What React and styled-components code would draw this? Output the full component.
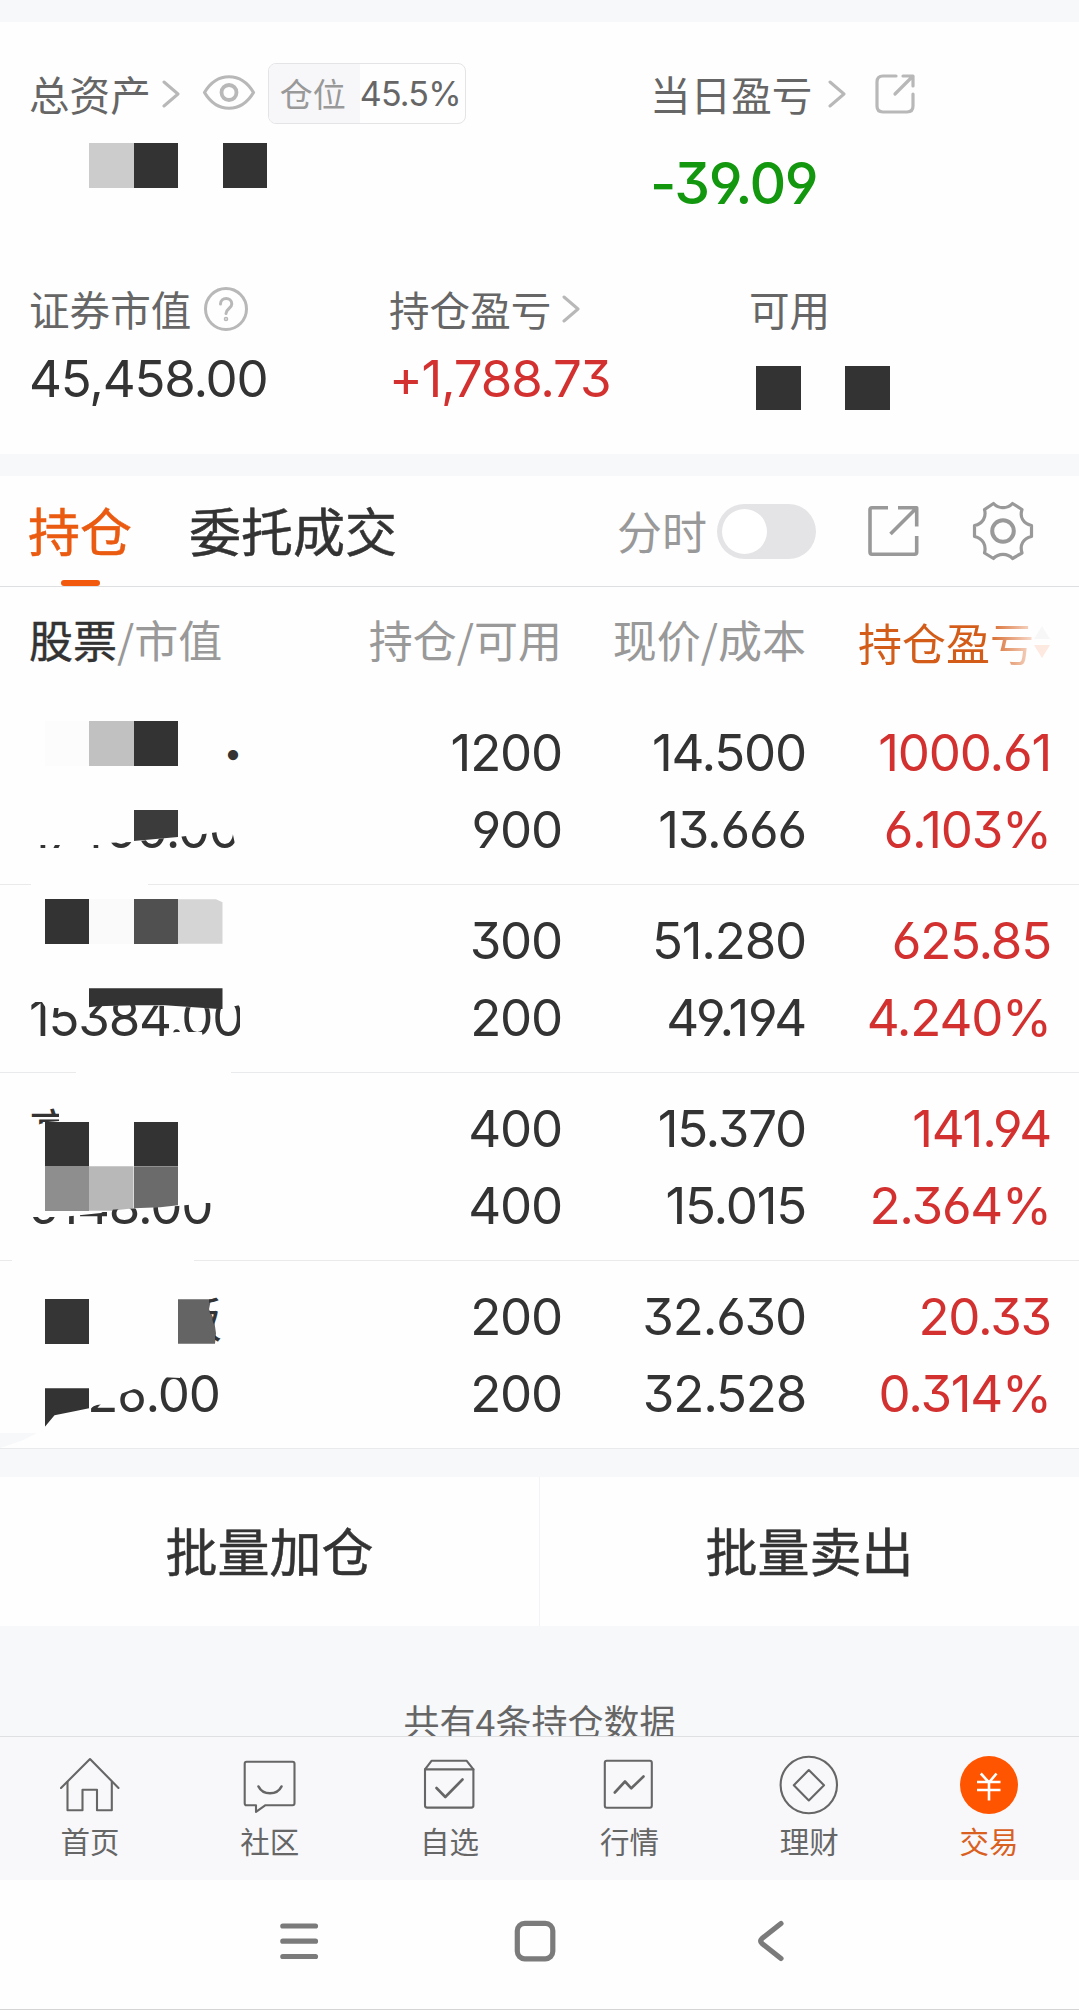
import React from "react";
import styled, { createGlobalStyle } from "styled-components";

const GlobalStyle = createGlobalStyle`
  * {
    box-sizing: border-box;
  }
  body {
    margin: 0;
    background-color: #f7f8fa;
    font-family: "Noto Sans CJK SC", sans-serif;
    color: #333;
  }
`;

const Page = styled.div`
  width: 1079px;
  height: 2010px;
  display: flex;
  flex-direction: column;
  overflow: hidden;
`;

/* ---------- shared ---------- */
const Num = styled.span`
  font-family: "Inter", "Noto Sans CJK SC", sans-serif;
  font-size: ${(p) => p.$size || 51}px;
  font-weight: ${(p) => p.$weight || 400};
  font-feature-settings: "cv03", "cv04", "cv09";
  letter-spacing: ${(p) => p.$track || -1.2}px;
  color: ${(p) => p.$color || "#333"};
  white-space: nowrap;
`;

const Svg = styled.svg`
  display: block;
  flex: none;
  fill: none;
  stroke: ${(p) => p.$color || "#b8b8b8"};
  stroke-width: ${(p) => p.$stroke || 3};
  stroke-linecap: round;
  stroke-linejoin: round;
  margin-left: ${(p) => p.$left || 0}px;
`;

const Chevron = ({ left }) => (
  <Svg width="18" height="30" viewBox="0 0 18 30" $left={left}>
    <path d="M2 3L16 15L2 27" />
  </Svg>
);

/* ---------- asset overview ---------- */
const Overview = styled.section`
  height: 432px;
  margin-top: 22px;
  padding: 41px 0 0 29px;
  background-color: #fefefe;
`;
const TopGrid = styled.div`
  display: grid;
  grid-template-columns: 621px 1fr;
`;
const StatGrid = styled.div`
  display: grid;
  grid-template-columns: 360px 360px 1fr;
  margin-top: 61px;
`;
const LabelRow = styled.div`
  display: flex;
  align-items: center;
  height: ${(p) => p.$height}px;
`;
const Label = styled.span`
  font-size: 40.6px;
  line-height: 50px;
  color: #666;
`;
const ValueRow = styled.div`
  display: flex;
  align-items: center;
  height: ${(p) => p.$height}px;
  margin-top: ${(p) => p.$top}px;
`;
const MaskRow = styled.div`
  display: flex;
  height: 44.5px;
  margin: ${(p) => p.$top}px 0 0 ${(p) => p.$left}px;
`;
const Block = styled.div`
  width: 44.5px;
  height: 44.5px;
  background-color: ${(p) => p.$color || "transparent"};
`;
const Badge = styled.div`
  display: flex;
  width: 198px;
  height: 61px;
  margin-left: 12px;
  border: 1px solid #e4e4e6;
  border-radius: 8px;
  overflow: hidden;
`;
const BadgeName = styled.div`
  width: 91px;
  padding-left: 11px;
  background-color: #f7f7fa;
  color: #999;
  font-size: 33px;
  line-height: 58px;
`;
const BadgeValue = styled.div`
  display: flex;
  align-items: center;
`;

/* ---------- tabs ---------- */
const Tabs = styled.div`
  display: flex;
  align-items: center;
  height: 111px;
  margin-top: 22px;
  padding-left: 28px;
  background-color: #fefefe;
  border-bottom: 1px solid #dedfe0;
`;
const Tab = styled.div`
  position: relative;
  height: 110px;
  margin-right: 57px;
  font-size: 52px;
  line-height: 107px;
  color: ${(p) => (p.$active ? "#ea5a10" : "#333")};
  -webkit-text-stroke: 0.5px currentColor;

  &::after {
    content: "";
    display: ${(p) => (p.$active ? "block" : "none")};
    position: absolute;
    left: 33px;
    bottom: 0;
    width: 39px;
    height: 6px;
    border-radius: 3px;
    background-color: #f2590d;
  }
`;
const Tools = styled.div`
  display: flex;
  align-items: center;
  margin-left: auto;
  padding-right: 45px;
`;
const ToolLabel = styled.span`
  font-size: 45px;
  line-height: 60px;
  color: #999;
`;
const Switch = styled.div`
  width: 99px;
  height: 55px;
  margin-left: 10px;
  padding: 5px;
  border-radius: 28px;
  background-color: #e4e4e7;
`;
const Knob = styled.div`
  width: 45px;
  height: 45px;
  border-radius: 50%;
  background-color: #fff;
`;

/* ---------- table ---------- */
const Table = styled.div`
  background-color: #fefefe;
`;
const Columns = styled.div`
  display: grid;
  grid-template-columns: 360px 202px 244px 245px;
  padding-right: 28px;
`;
const Head = styled(Columns)`
  height: 110px;
  font-size: 44px;
  line-height: 105px;
  color: #999;
`;
const HeadCell = styled.div`
  padding-left: ${(p) => p.$left || 0}px;
  text-align: ${(p) => (p.$left ? "left" : "right")};
  white-space: nowrap;
`;
const Strong = styled.span`
  color: #333;
  -webkit-text-stroke: 0.4px currentColor;
`;
const SortCell = styled.div`
  display: flex;
  align-items: center;
  padding-left: 52px;
`;
const SortText = styled.span`
  background: linear-gradient(90deg, #d35c18 72%, #f6d5c4 98%);
  background-clip: text;
  color: transparent;
`;
const Row = styled(Columns)`
  position: relative;
  height: 188px;
  padding-top: 17px;
  border-bottom: 1px solid #e9eaec;
`;
const Cell = styled.div`
  display: flex;
  flex-direction: column;
  align-items: flex-end;
`;
const Line = styled.div`
  height: 77px;
  line-height: 77px;
`;
/* name and market value, only the unmasked parts stay visible */
const Name = styled.div`
  height: 77px;
  padding-left: 29px;
  font-size: 48px;
  line-height: 77px;
  clip-path: ${(p) => p.$clip || "none"};
`;
const Worth = styled.div`
  height: 77px;
  padding-left: 29px;
  line-height: 77px;
  clip-path: ${(p) => p.$clip || "none"};
`;
const Tile = styled.div`
  position: absolute;
  left: ${(p) => p.$x}px;
  top: ${(p) => p.$y}px;
  width: ${(p) => p.$w || 44.5}px;
  height: ${(p) => p.$h || 44.5}px;
  background-color: ${(p) => p.$color};
  clip-path: ${(p) => p.$clip || "none"};
`;

/* ---------- bottom ---------- */
const Actions = styled.div`
  display: flex;
  height: 149px;
  margin-top: 28px;
  background-color: #fefefe;
`;
const Action = styled.button`
  flex: 1;
  padding: 0 0 5px;
  border: none;
  border-right: ${(p) => (p.$divided ? "1px solid #f2f3f5" : "none")};
  background: none;
  font-family: inherit;
  font-size: 52px;
  color: #333;
  -webkit-text-stroke: 0.5px currentColor;
`;
const Summary = styled.div`
  height: 110px;
  padding-top: 68px;
  overflow: hidden;
  text-align: center;
  font-size: 36px;
  line-height: 52px;
  color: #666;
`;
const TabBar = styled.nav`
  display: flex;
  height: 144px;
  border-top: 1px solid #dfe0e2;
  background-color: #f8f8fb;
`;
const TabItem = styled.div`
  flex: 1;
  display: flex;
  flex-direction: column;
  align-items: center;
  padding-top: 18px;
  font-size: 29.5px;
  line-height: 50px;
  color: ${(p) => (p.$active ? "#d9601f" : "#666")};
`;
const SystemBar = styled.div`
  display: flex;
  align-items: center;
  height: 130px;
  padding-left: 278px;
  padding-bottom: 7px;
  background-color: #fefefe;
  border-bottom: 1px solid #d4d4d4;
`;

const DARK = "#333";

const rows = [
  {
    name: "·",
    namePad: 209,
    worth: "17400.00",
    worthClip:
      "polygon(0 54px, 100px 54px, 104px 52px, 132px 51px, 156px 48px, 178px 46px, 204px 43px, 232px 39px, 240px 77px, 0 77px)",
    hold: ["1200", "900"],
    price: ["14.500", "13.666"],
    profit: ["1000.61", "6.103%"],
    tiles: [
      { x: 44.5, y: 24, c: "#fcfcfc" },
      { x: 89, y: 24, c: "#c1c1c1" },
      { x: 133.5, y: 24, c: DARK },
      { x: 133.5, y: 113, h: 31, c: "#3b3b3b", clip: "polygon(0 0, 100% 0, 100% 27px, 0 100%)" },
      { x: 31, y: 187, w: 117, h: 1, c: "#fefefe" },
    ],
  },
  {
    worth: "15384.00",
    worthClip:
      "polygon(0 23px, 42px 23px, 46px 29px, 89px 29px, 98px 27px, 133px 26px, 165px 27px, 222px 30px, 240px 26px, 240px 77px, 206px 77px, 202px 53px, 176px 53px, 164px 55px, 160px 77px, 0 77px)",
    hold: ["300", "200"],
    price: ["51.280", "49.194"],
    profit: ["625.85", "4.240%"],
    tiles: [
      { x: 44.5, y: 14.3, c: DARK },
      { x: 89, y: 14.3, c: "#fafafa" },
      { x: 133.5, y: 14.3, c: "#505050" },
      { x: 178, y: 14.3, c: "#d5d5d5", clip: "polygon(0 0, 38px 0, 100% 3px, 100% 100%, 0 100%)" },
      {
        x: 89,
        y: 103.3,
        w: 133.5,
        h: 21,
        c: DARK,
        clip: "polygon(0 0, 100% 0, 100% 100%, 76px 17px, 44px 17px, 8px 18px, 0 19px)",
      },
      { x: 76, y: 187, w: 155, h: 1, c: "#fefefe" },
    ],
  },
  {
    name: "高",
    nameClip: "polygon(0 0, 59px 0, 59px 31px, 48px 32px, 40px 34px, 32px 39px, 0 39px)",
    worth: "6148.00",
    worthClip:
      "polygon(0 50px, 60px 50px, 72px 49px, 101px 46px, 106px 43px, 178px 39px, 206px 36px, 230px 36px, 230px 77px, 0 77px)",
    hold: ["400", "400"],
    price: ["15.370", "15.015"],
    profit: ["141.94", "2.364%"],
    tiles: [
      { x: 44.5, y: 48.7, c: DARK },
      { x: 133.5, y: 48.7, c: DARK },
      { x: 44.5, y: 93.2, c: "#8e8e8e" },
      { x: 89, y: 93.2, c: "#b8b8b8", clip: "polygon(0 0, 100% 0, 100% 42px, 50% 100%, 0 100%)" },
      { x: 133.5, y: 93.2, c: "#6b6b6b", clip: "polygon(0 0, 100% 0, 100% 39px, 60% 41px, 0 42px)" },
      { x: 12, y: 187, w: 182, h: 1, c: "#fefefe" },
    ],
  },
  {
    name: "板",
    namePad: 174,
    nameClip: "polygon(209px 0, 221px 0, 221px 77px, 215px 77px, 215px 50px, 209px 32px)",
    worth: "6526.00",
    worthClip:
      "polygon(89px 53px, 97px 50px, 112px 48px, 115px 41px, 134px 34px, 150px 24px, 160px 22px, 180px 23px, 184px 15px, 240px 15px, 240px 77px, 89px 77px)",
    hold: ["200", "200"],
    price: ["32.630", "32.528"],
    profit: ["20.33", "0.314%"],
    tiles: [
      { x: 44.5, y: 38.3, c: "#353535" },
      {
        x: 178,
        y: 38.3,
        w: 38,
        c: "#646464",
        clip: "polygon(0 0, 33px 0, 31px 10px, 36px 20px, 38px 34px, 37px 100%, 0 100%)",
      },
      {
        x: 44.5,
        y: 127.3,
        h: 39,
        c: DARK,
        clip: "polygon(0 0, 100% 0, 100% 20px, 30px 23px, 10px 27px, 0 100%)",
      },
      { x: 0, y: 172, w: 37, h: 15, c: "#f7f8fa", clip: "polygon(0 0, 100% 0, 60% 50%, 0 100%)" },
    ],
  },
];

const tabItems = [
  {
    label: "首页",
    icon: (
      <>
        <path d="M1 33L30 4L58.5 33" />
        <path d="M7.5 27V55.3H22.5V34.7H37V55.3H51.8V27" />
      </>
    ),
  },
  {
    label: "社区",
    icon: (
      <>
        <path d="M6.5 6.8H52.5Q54.5 6.8 54.5 8.8V48.2Q54.5 50.2 52.5 50.2H25.5L16 56.8V50.2H6.5Q4.7 50.2 4.7 48.2V8.8Q4.7 6.8 6.5 6.8Z" />
        <path d="M18.5 31.5C23 40.5 37 40.5 41.5 31.5" strokeWidth="2.6" />
      </>
    ),
  },
  {
    label: "自选",
    icon: (
      <>
        <path d="M5 14.4L11.5 5.8H46.7L53.4 14.4V50.5Q53.4 52.6 51.3 52.6H7.1Q5 52.6 5 50.5Z" />
        <path d="M5 14.4H53.4" />
        <path d="M16.5 33L25.3 42L42.5 24.5" strokeWidth="2.6" />
      </>
    ),
  },
  {
    label: "行情",
    icon: (
      <>
        <rect x="5.8" y="5.8" width="47" height="47" rx="2" />
        <path d="M15.8 37.5L26 26.5L32.3 33.3L44.5 21.5" strokeWidth="2.6" />
      </>
    ),
  },
  {
    label: "理财",
    icon: (
      <>
        <circle cx="29.8" cy="30" r="28.2" />
        <path d="M29.8 15L45 30.2L29.8 45.4L14.8 30.2Z" />
      </>
    ),
  },
  {
    label: "交易",
    active: true,
    icon: (
      <>
        <circle cx="30" cy="30" r="29" fill="#ff5500" stroke="none" />
        <path
          d="M21.8 18.5L30 27.5L37.5 18.5M30 27.5V45.5M18 27H41.5M18 35H41.5"
          stroke="#fff"
          strokeLinecap="butt"
          strokeWidth="2.6"
        />
      </>
    ),
  },
];

const Holding = ({ row }) => (
  <Row>
    {row.tiles.map((t, i) => (
      <Tile key={i} $x={t.x} $y={t.y} $w={t.w} $h={t.h} $color={t.c} $clip={t.clip} />
    ))}
    <div>
      <Name $clip={row.nameClip} style={{ paddingLeft: row.namePad }}>
        {row.name}
      </Name>
      <Worth $clip={row.worthClip}>
        <Num>{row.worth}</Num>
      </Worth>
    </div>
    {[row.hold, row.price, row.profit].map((pair, i) => (
      <Cell key={i}>
        {pair.map((value, j) => (
          <Line key={j}>
            <Num $color={i === 2 ? "#d33030" : DARK}>{value}</Num>
          </Line>
        ))}
      </Cell>
    ))}
  </Row>
);

const App = () => {
  return (
    <Page>
      <GlobalStyle />
      <Overview>
        <TopGrid>
          <div>
            <LabelRow $height={61}>
              <Label>总资产</Label>
              <Chevron left={11} />
              <Svg width="54" height="40" viewBox="0 0 54 40" $left={22} $stroke={3.2}>
                <path d="M2.5 18.5C15 -2.5 39 -2.5 51.5 18.5C39 39.500 15 39.500 2.500 18.500Z" />
                <circle cx="27" cy="18.500" r="7.500" strokeWidth="3.800" />
              </Svg>
              <Badge>
                <BadgeName>仓位</BadgeName>
                <BadgeValue>
                  <Num $size={34} $color="#666" $track={-0.8}>
                    45.5%
                  </Num>
                </BadgeValue>
              </Badge>
            </LabelRow>
            <MaskRow $top={19} $left={60}>
              <Block $color="#ccc" />
              <Block $color={DARK} />
              <Block />
              <Block $color={DARK} />
            </MaskRow>
          </div>
          <div>
            <LabelRow $height={61}>
              <Label>当日盈亏</Label>
              <Chevron left={16} />
              <Svg width="42" height="42" viewBox="0 0 42 42" $left={28} $stroke={3.2}>
                <path d="M22 3H9Q3 3 3 9V33Q3 39 9 39H33Q39 39 39 33V21" />
                <path d="M29 3H39V13M38 4L21 21" />
              </Svg>
            </LabelRow>
            <ValueRow $height={80} $top={19}>
              <Num $size={57} $weight={500} $track={-1.5} $color="#12970f">
                -39.09
              </Num>
            </ValueRow>
          </div>
        </TopGrid>
        <StatGrid>
          <div>
            <LabelRow $height={50}>
              <Label>证券市值</Label>
              <Svg width="46" height="46" viewBox="0 0 46 46" $left={12}>
                <circle cx="23" cy="23" r="20.5" />
                <path d="M17.500 18C17.500 10.500 28.800 10.500 28.800 18C28.800 22.500 23 22.500 23 27.500" />
                <circle cx="23" cy="33" r="0.8" />
              </Svg>
            </LabelRow>
            <ValueRow $height={60} $top={14}>
              <Num>45,458.00</Num>
            </ValueRow>
          </div>
          <div>
            <LabelRow $height={50}>
              <Label>持仓盈亏</Label>
              <Chevron left={11} />
            </LabelRow>
            <ValueRow $height={60} $top={14}>
              <Num $color="#d33030">+1,788.73</Num>
            </ValueRow>
          </div>
          <div>
            <LabelRow $height={50}>
              <Label>可用</Label>
            </LabelRow>
            <MaskRow $top={31.5} $left={7}>
              <Block $color={DARK} />
              <Block />
              <Block $color={DARK} />
            </MaskRow>
          </div>
        </StatGrid>
      </Overview>

      <Tabs>
        <Tab $active>持仓</Tab>
        <Tab>委托成交</Tab>
        <Tools>
          <ToolLabel>分时</ToolLabel>
          <Switch>
            <Knob />
          </Switch>
          <Svg width="54" height="54" viewBox="0 0 54 54" $left={50} $color="#999" $stroke={3.6}>
            <g strokeLinecap="butt">
              <path d="M22 3.800H6Q4 3.800 4 5.800V48Q4 50.200 6 50.200H48.500Q50.700 50.200 50.700 48V32" />
              <path d="M32 3.800H50.700V22.500M50 4.500L24.500 30" />
            </g>
          </Svg>
          <Svg width="62" height="62" viewBox="0 0 62 62" $left={52} $color="#999" $stroke={3.2}>
            <path d="M12.500 9.500L21.500 3.500C26.500 9 35.500 9 40.500 3.500L50 9.500C47.500 17 51 23.500 59.500 25.500V36.500C51 38.500 47.500 45 50 53L40.500 58.500C35.500 53 26.500 53 21.500 58.500L12.500 53C14.500 45 11 38.500 2.500 36.500V25.500C11 23.500 14.500 17 12.500 9.500Z" />
            <circle cx="31" cy="31" r="10.800" strokeWidth="4" />
          </Svg>
        </Tools>
      </Tabs>

      <Table>
        <Head>
          <HeadCell $left={29}>
            <Strong>股票</Strong>/市值
          </HeadCell>
          <HeadCell>持仓/可用</HeadCell>
          <HeadCell>现价/成本</HeadCell>
          <SortCell>
            <SortText>持仓盈亏</SortText>
            <Svg width="16" height="34" viewBox="0 0 16 34">
              <path d="M0 14L8 1L16 14Z" fill="#f7f7f8" stroke="none" />
              <path d="M0 20L8 33L16 20Z" fill="#fde9e0" stroke="none" />
            </Svg>
          </SortCell>
        </Head>
        {rows.map((row) => (
          <Holding key={row.worth} row={row} />
        ))}
      </Table>

      <Actions>
        <Action $divided>批量加仓</Action>
        <Action>批量卖出</Action>
      </Actions>
      <Summary>共有4条持仓数据</Summary>

      <TabBar>
        {tabItems.map((item) => (
          <TabItem key={item.label} $active={item.active}>
            <Svg width="60" height="60" viewBox="0 0 60 60" $color="#666" $stroke={2.1}>
              {item.icon}
            </Svg>
            {item.label}
          </TabItem>
        ))}
      </TabBar>

      <SystemBar>
        <Svg width="42" height="42" viewBox="0 0 42 42" $color="#7b7b7b" $stroke={5.2}>
          <path d="M4.800 6H37.500M4.800 21.200H37.500M4.800 36.500H37.500" />
        </Svg>
        <Svg width="42" height="42" viewBox="0 0 42 42" $left={194} $color="#7b7b7b" $stroke={5.200}>
          <rect x="3.300" y="3.300" width="35.500" height="35.500" rx="7.500" />
        </Svg>
        <Svg width="30" height="42" viewBox="0 0 30 42" $left={200} $color="#7b7b7b" $stroke={5.200}>
          <path d="M25 3.500L6 18.500Q3.500 21 6 23.500L25 38.500" />
        </Svg>
      </SystemBar>
    </Page>
  );
};

export default App;
